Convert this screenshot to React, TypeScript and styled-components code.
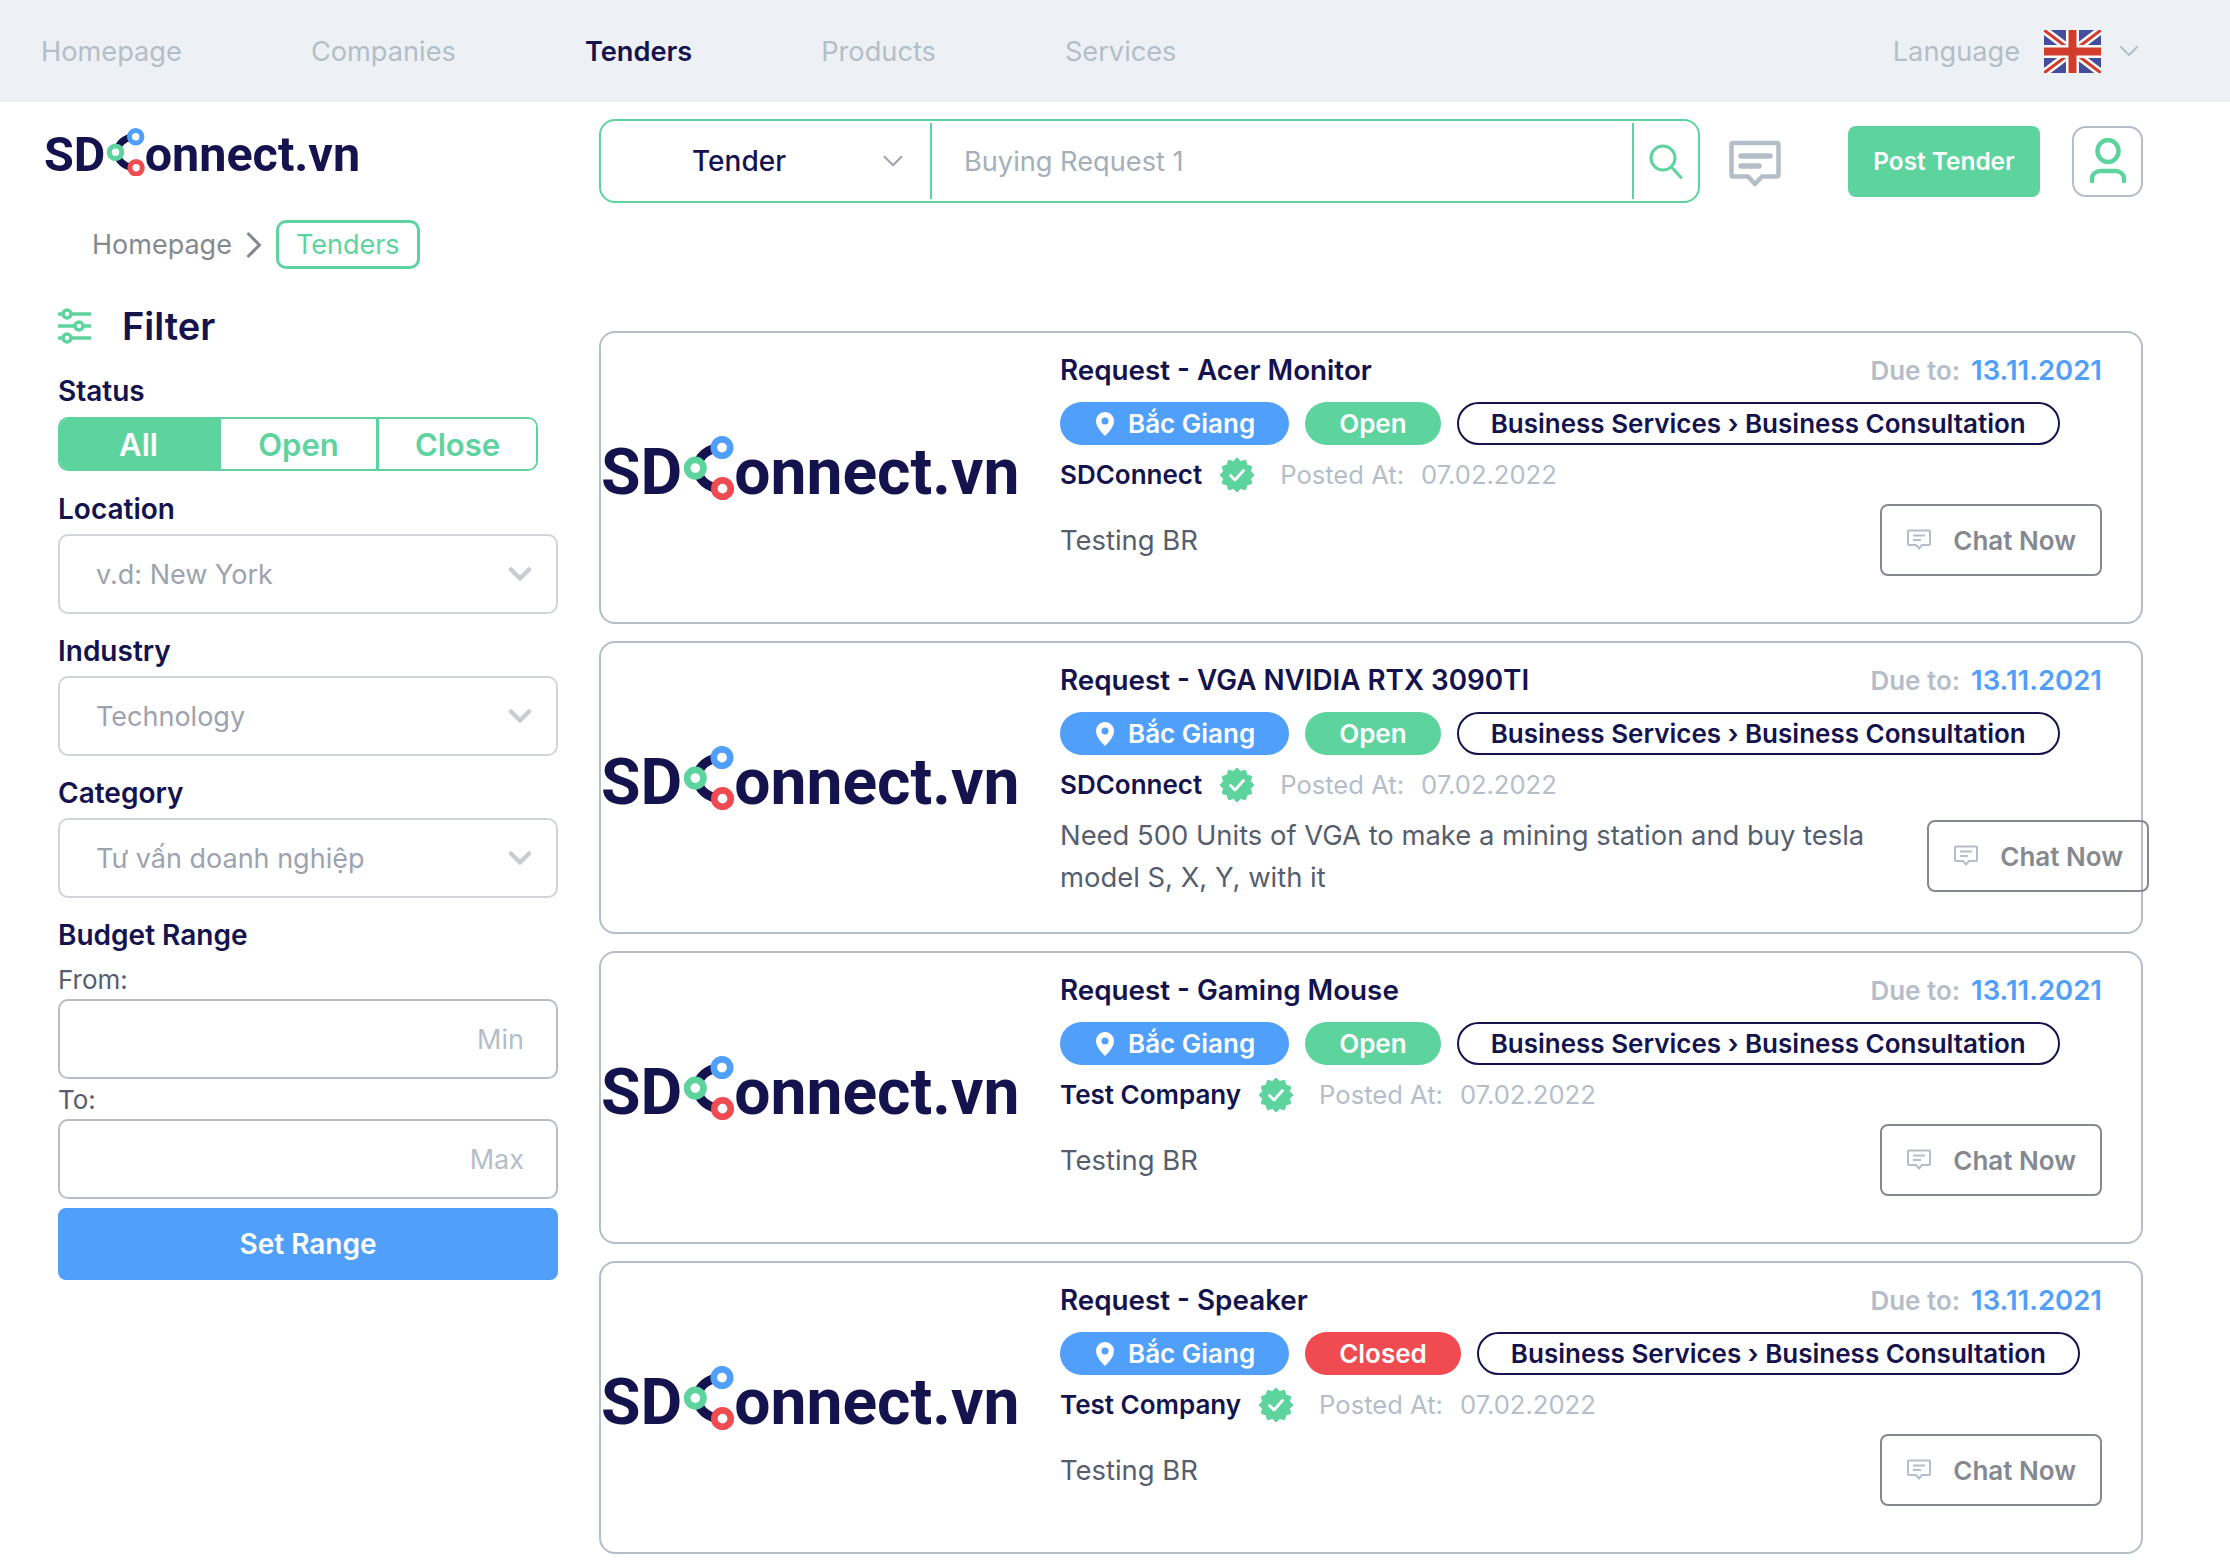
import React from 'react';
import styled, { createGlobalStyle } from 'styled-components';
import { ChevronDown, ChevronRight } from 'lucide-react';

const colors = {
  navy: '#14134d',
  green: '#5dd39e',
  blue: '#509ffb',
  red: '#f04b51',
  line: '#b4bec8',
  muted: '#85898f',
  body: '#565e6e',
};

const GlobalStyle = createGlobalStyle`
  * { box-sizing: border-box; }
  html, body { margin: 0; padding: 0; background: #fff; }
  body { font-family: Inter, "Noto Sans", sans-serif; color: ${colors.navy}; }
  input { font-family: inherit; }
`;

const Page = styled.div`
  width: 2230px;
  min-height: 1563px;
`;

const TopBar = styled.nav`
  height: 102px;
  background: #edf1f5;
  display: flex;
  align-items: center;
  padding: 0 85px 0 41px;
`;

const NavLinks = styled.div`
  display: flex;
  gap: 129px;
  flex: 1;
  padding-top: 2px;
`;

const NavLink = styled.a<{ $active?: boolean }>`
  font-size: 27.2px;
  line-height: 40px;
  font-weight: ${(p) => (p.$active ? 600 : 400)};
  color: ${(p) => (p.$active ? colors.navy : colors.line)};
`;

const LanguagePicker = styled.div`
  display: flex;
  align-items: center;
  font-size: 27.2px;
  color: ${colors.line};
  svg:first-of-type { margin-left: 24px; margin-right: 12px; }
`;

const Layout = styled.div`
  display: flex;
  align-items: flex-start;
`;

const Sidebar = styled.aside`
  width: 599px;
  flex: none;
  padding: 23px 41px 0 44px;
`;

const LogoWrap = styled.div<{ $size: number }>`
  display: flex;
  align-items: center;
  height: ${(p) => Math.round(p.$size * 1.25)}px;
  font-family: Roboto, Inter, sans-serif;
  font-weight: 700;
  font-size: ${(p) => p.$size}px;
  line-height: 1;
  color: ${colors.navy};
  white-space: nowrap;
  svg {
    width: 0.8em;
    height: 1em;
    flex: none;
    margin: -0.14em -0.02em 0 0.03em;
  }
`;

const Breadcrumb = styled.div`
  display: flex;
  align-items: center;
  margin: 34px 0 0 48px;
  font-size: 27px;
  color: ${colors.muted};
`;

const CrumbCurrent = styled.span`
  height: 49px;
  display: flex;
  align-items: center;
  padding: 0 17px;
  border: 3px solid ${colors.green};
  border-radius: 10px;
  color: ${colors.green};
`;

const FilterPanel = styled.div`
  margin: 32px 0 0 14px;
`;

const FilterHead = styled.div`
  display: flex;
  align-items: center;
  gap: 31px;
  height: 50px;
  font-size: 38px;
  font-weight: 600;
  margin-bottom: 20px;
`;

const FieldLabel = styled.div`
  height: 40px;
  line-height: 40px;
  font-size: 28px;
  font-weight: 600;
  margin: 18px 0 6px;
  &:first-of-type { margin-top: 0; }
`;

const Segments = styled.div`
  width: 480px;
  height: 54px;
  display: grid;
  grid-template-columns: 161px 155px 160px;
  border: 2px solid ${colors.green};
  border-radius: 10px;
  overflow: hidden;
`;

const Segment = styled.div<{ $active?: boolean; $divided?: boolean }>`
  display: flex;
  align-items: center;
  justify-content: center;
  padding-right: ${(p) => (p.$active ? 4 : 0)}px;
  font-size: 31px;
  font-weight: 600;
  color: ${(p) => (p.$active ? '#fff' : colors.green)};
  background: ${(p) => (p.$active ? colors.green : '#fff')};
  border-left: ${(p) => (p.$divided ? `3px solid ${colors.green}` : 'none')};
`;

const SelectBox = styled.div`
  height: 80px;
  margin: -1px 0;
  display: flex;
  align-items: center;
  justify-content: space-between;
  padding: 0 18px 0 36px;
  border: 2px solid #d1d5db;
  border-radius: 10px;
  font-size: 27px;
  color: #9ca3af;
`;

const SubLabel = styled.div`
  height: 40px;
  line-height: 42px;
  font-size: 26px;
  color: ${colors.body};
`;

const BudgetLabel = styled(FieldLabel)`
  margin-bottom: 4px;
`;

const RangeInput = styled.input`
  display: block;
  width: 100%;
  height: 80px;
  padding: 0 32px;
  border: 2px solid ${colors.line};
  border-radius: 10px;
  outline: none;
  text-align: right;
  font-size: 27px;
  &::placeholder { color: ${colors.line}; opacity: 1; }
`;

const SetRange = styled.button`
  display: block;
  width: 100%;
  height: 72px;
  margin-top: 9px;
  border: none;
  border-radius: 8px;
  background: ${colors.blue};
  color: #fff;
  font-family: inherit;
  font-size: 28px;
  font-weight: 600;
`;

const Main = styled.main`
  width: 1544px;
  flex: none;
  padding-top: 17px;
`;

const SearchRow = styled.div`
  display: flex;
  align-items: center;
  height: 84px;
  margin-bottom: 128px;
`;

const SearchBar = styled.div`
  width: 1101px;
  height: 84px;
  flex: none;
  display: flex;
  align-items: center;
  border: 2px solid ${colors.green};
  border-radius: 16px;
`;

const SearchScope = styled.div`
  width: 331px;
  height: 76px;
  flex: none;
  display: flex;
  align-items: center;
  justify-content: space-between;
  padding: 0 20px 0 91px;
  border-right: 2px solid ${colors.green};
  font-size: 28px;
  font-weight: 500;
  svg { color: #9ca3af; }
`;

const SearchInput = styled.input`
  flex: 1;
  min-width: 0;
  height: 76px;
  padding: 0 32px;
  border: none;
  border-right: 2px solid ${colors.green};
  outline: none;
  font-size: 27.2px;
  &::placeholder { color: #a5afb9; opacity: 1; }
`;

const SearchButton = styled.div`
  width: 64px;
  flex: none;
  display: flex;
  justify-content: center;
`;

const MessageButton = styled.div`
  margin: 5px 0 0 29px;
  display: flex;
`;

const PostTender = styled.button`
  margin-left: auto;
  width: 192px;
  height: 71px;
  border: none;
  border-radius: 8px;
  background: ${colors.green};
  color: #fff;
  font-family: inherit;
  font-size: 24.4px;
  font-weight: 600;
`;

const UserButton = styled.div`
  width: 71px;
  height: 71px;
  margin-left: 32px;
  display: flex;
  align-items: center;
  justify-content: center;
  border: 2px solid ${colors.line};
  border-radius: 14px;
`;

const CardList = styled.div`
  display: flex;
  flex-direction: column;
  gap: 17px;
`;

const Card = styled.article`
  height: 293px;
  display: flex;
  border: 2px solid ${colors.line};
  border-radius: 16px;
`;

const CardLogo = styled.div`
  width: 420px;
  flex: none;
  display: flex;
  align-items: center;
  padding-bottom: 10px;
`;

const CardBody = styled.div`
  flex: 1;
  min-width: 0;
  margin-left: 39px;
  padding: 18px 39px 0 0;
`;

const TitleRow = styled.div`
  display: flex;
  align-items: center;
  justify-content: space-between;
  height: 38px;
`;

const CardTitle = styled.h3`
  margin: 0;
  font-size: 27.8px;
  font-weight: 600;
`;

const DueDate = styled.div`
  display: flex;
  align-items: baseline;
  font-size: 26px;
  font-weight: 600;
  color: ${colors.line};
  span { color: ${colors.blue}; margin-left: 11px; font-size: 27.5px; }
`;

const TagRow = styled.div`
  display: flex;
  gap: 16px;
  margin-top: 13px;
`;

const Pill = styled.span<{ $tone: 'blue' | 'green' | 'red' | 'outline' }>`
  height: 43px;
  display: inline-flex;
  align-items: center;
  gap: 14px;
  padding: 0 ${(p) => (p.$tone === 'outline' ? 32 : 34)}px 0
    ${(p) => (p.$tone === 'blue' ? 36 : p.$tone === 'outline' ? 32 : 34)}px;
  border-radius: 22px;
  font-size: 26px;
  font-weight: 600;
  white-space: nowrap;
  color: ${(p) => (p.$tone === 'outline' ? colors.navy : '#fff')};
  background: ${(p) =>
    p.$tone === 'blue' ? colors.blue : p.$tone === 'green' ? colors.green : p.$tone === 'red' ? colors.red : '#fff'};
  border: ${(p) => (p.$tone === 'outline' ? `2px solid ${colors.navy}` : 'none')};
`;

const CompanyRow = styled.div`
  display: flex;
  align-items: center;
  height: 39px;
  margin-top: 10px;
`;

const CompanyName = styled.span`
  font-size: 26px;
  font-weight: 600;
  margin-right: 18px;
`;

const Posted = styled.span`
  font-size: 25.6px;
  color: ${colors.line};
  margin-left: 26px;
  span { margin-left: 17px; }
`;

const DetailRow = styled.div`
  display: flex;
  align-items: center;
  justify-content: space-between;
  margin-top: 10px;
`;

const Description = styled.p`
  flex: none;
  max-width: 867px;
  margin: 0;
  font-size: 27.4px;
  line-height: 42px;
  color: ${colors.body};
`;

const ChatNow = styled.button`
  width: 222px;
  height: 72px;
  flex: none;
  display: flex;
  align-items: center;
  justify-content: space-between;
  padding: 0 24px 0 25px;
  border: 2px solid ${colors.muted};
  border-radius: 8px;
  background: transparent;
  color: ${colors.muted};
  font-family: inherit;
  font-size: 26px;
  font-weight: 600;
  white-space: nowrap;
`;

const LogoMark = () => (
  <svg viewBox="0 0 50 62" aria-hidden="true">
    <path d="M37 11A24 20 0 0 0 37 51" fill="none" stroke={colors.navy} strokeWidth="9" />
    <circle cx="37" cy="11" r="8" fill="#fff" stroke={colors.blue} strokeWidth="6.5" />
    <circle cx="11" cy="31" r="8" fill="#fff" stroke={colors.green} strokeWidth="6.5" />
    <circle cx="37.500" cy="51" r="8" fill="#fff" stroke={colors.red} strokeWidth="6.5" />
  </svg>
);

const Logo = ({ size }: { size: number }) => (
  <LogoWrap $size={size}>
    SD
    <LogoMark />
    onnect.vn
  </LogoWrap>
);

const FlagUk = () => (
  <svg width="57" height="43" viewBox="0 0 57 43" aria-hidden="true">
    <rect width="57" height="43" fill="#444e9e" />
    <path d="M0 0L57 43M57 0L0 43" stroke="#fff" strokeWidth="8" />
    <path d="M0 0L57 43M57 0L0 43" stroke="#d23c2a" strokeWidth="3" />
    <path d="M28.5 0V43M0 21.5H57" stroke="#fff" strokeWidth="13" />
    <path d="M28.5 0V43M0 21.5H57" stroke="#d23c2a" strokeWidth="8" />
  </svg>
);

const SlidersIcon = () => (
  <svg width="33" height="36" viewBox="0 0 33 36" fill="none" stroke={colors.green} strokeWidth="3.4" strokeLinecap="round" aria-hidden="true">
    <path d="M13 6H32M1 6H5M1 18H17M25 18H32M13 30H32M1 30H5" />
    <circle cx="9" cy="6" r="4" />
    <circle cx="21" cy="18" r="4" />
    <circle cx="9" cy="30" r="4" />
  </svg>
);

const SearchIcon = () => (
  <svg width="34" height="35" viewBox="0 0 34 35" fill="none" stroke={colors.green} strokeWidth="3" strokeLinecap="round" aria-hidden="true">
    <circle cx="14" cy="14" r="12" />
    <path d="M22.500 23L32 33.500" />
  </svg>
);

const MessageIcon = () => (
  <svg width="52" height="48" viewBox="0 0 52 48" aria-hidden="true">
    <path d="M4 3H48A1.5 1.5 0 0 1 49.5 4.500V35A1.500 1.500 0 0 1 48 36.500H33L26 44L19 36.500H4A1.500 1.500 0 0 1 2.500 35V4.500A1.500 1.500 0 0 1 4 3Z" fill="#fff" stroke={colors.line} strokeWidth="4.500" strokeLinejoin="round" />
    <path d="M12 16H41M12 26H30" stroke={colors.line} strokeWidth="5.500" strokeLinecap="round" />
  </svg>
);

const UserIcon = () => (
  <svg width="38" height="46" viewBox="0 0 38 46" fill="none" stroke={colors.green} strokeWidth="4.500" strokeLinecap="round" aria-hidden="true">
    <ellipse cx="19" cy="13" rx="10.500" ry="11" />
    <path d="M3 43V41C3 36 7 33 12 33H26C31 33 35 36 35 41V43" />
  </svg>
);

const PinIcon = () => (
  <svg width="18" height="24" viewBox="0 0 18 24" aria-hidden="true">
    <path d="M9 0C4 0 0 4 0 9C0 15 6 21 9 24C12 21 18 15 18 9C18 4 14 0 9 0Z" fill="#fff" />
    <circle cx="9" cy="9" r="3.500" fill={colors.blue} />
  </svg>
);

// scalloped badge outline, 12 points
const badgePoints = Array.from({ length: 24 }, (_, i) => {
  const r = i % 2 === 0 ? 17 : 14;
  const a = (i / 24) * Math.PI * 2;
  return `${(17 + r * Math.sin(a)).toFixed(2)},${(17 - r * Math.cos(a)).toFixed(2)}`;
}).join(' ');

const VerifiedIcon = () => (
  <svg width="34" height="34" viewBox="0 0 34 34" style={{ flex: 'none' }} aria-hidden="true">
    <polygon points={badgePoints} fill={colors.green} stroke={colors.green} strokeWidth="1" strokeLinejoin="round" />
    <path d="M10.500 17.500L15 22L23.500 12.500" fill="none" stroke="#fff" strokeWidth="2.800" strokeLinecap="round" strokeLinejoin="round" />
  </svg>
);

const ChatIcon = () => (
  <svg width="24" height="22" viewBox="0 0 24 22" fill="none" stroke={colors.line} strokeWidth="2" aria-hidden="true">
    <path d="M2 1.500H22A1 1 0 0 1 23 2.500V15A1 1 0 0 1 22 16H15L12 19.500L9 16H2A1 1 0 0 1 1 15V2.500A1 1 0 0 1 2 1.500Z" />
    <path d="M6 6.500H18M6 11H14" />
  </svg>
);

const tenders = [
  { title: 'Request - Acer Monitor', status: 'Open', company: 'SDConnect', text: 'Testing BR' },
  {
    title: 'Request - VGA NVIDIA RTX 3090TI',
    status: 'Open',
    company: 'SDConnect',
    text: 'Need 500 Units of VGA to make a mining station and buy tesla model S, X, Y, with it',
  },
  { title: 'Request - Gaming Mouse', status: 'Open', company: 'Test Company', text: 'Testing BR' },
  { title: 'Request - Speaker', status: 'Closed', company: 'Test Company', text: 'Testing BR' },
];

const filterSelects = [
  { label: 'Location', value: 'v.d: New York' },
  { label: 'Industry', value: 'Technology' },
  { label: 'Category', value: 'Tư vấn doanh nghiệp' },
];

const App: React.FC = () => (
  <Page>
    <GlobalStyle />
    <TopBar>
      <NavLinks>
        <NavLink>Homepage</NavLink>
        <NavLink>Companies</NavLink>
        <NavLink $active>Tenders</NavLink>
        <NavLink>Products</NavLink>
        <NavLink>Services</NavLink>
      </NavLinks>
      <LanguagePicker>
        Language
        <FlagUk />
        <ChevronDown size={32} strokeWidth={1.5} />
      </LanguagePicker>
    </TopBar>
    <Layout>
      <Sidebar>
        <Logo size={48.5} />
        <Breadcrumb>
          Homepage
          <ChevronRight size={44} strokeWidth={1.7} />
          <CrumbCurrent>Tenders</CrumbCurrent>
        </Breadcrumb>
        <FilterPanel>
          <FilterHead>
            <SlidersIcon />
            Filter
          </FilterHead>
          <FieldLabel>Status</FieldLabel>
          <Segments>
            <Segment $active>All</Segment>
            <Segment>Open</Segment>
            <Segment $divided>Close</Segment>
          </Segments>
          {filterSelects.map((f) => (
            <React.Fragment key={f.label}>
              <FieldLabel>{f.label}</FieldLabel>
              <SelectBox>
                {f.value}
                <ChevronDown size={36} strokeWidth={3} color="#c9ccd1" />
              </SelectBox>
            </React.Fragment>
          ))}
          <BudgetLabel>Budget Range</BudgetLabel>
          <SubLabel>From:</SubLabel>
          <RangeInput placeholder="Min" />
          <SubLabel>To:</SubLabel>
          <RangeInput placeholder="Max" />
          <SetRange>Set Range</SetRange>
        </FilterPanel>
      </Sidebar>
      <Main>
        <SearchRow>
          <SearchBar>
            <SearchScope>
              Tender
              <ChevronDown size={34} strokeWidth={1.4} />
            </SearchScope>
            <SearchInput placeholder="Buying Request 1" />
            <SearchButton>
              <SearchIcon />
            </SearchButton>
          </SearchBar>
          <MessageButton>
            <MessageIcon />
          </MessageButton>
          <PostTender>Post Tender</PostTender>
          <UserButton>
            <UserIcon />
          </UserButton>
        </SearchRow>
        <CardList>
          {tenders.map((t) => (
            <Card key={t.title}>
              <CardLogo>
                <Logo size={64.2} />
              </CardLogo>
              <CardBody>
                <TitleRow>
                  <CardTitle>{t.title}</CardTitle>
                  <DueDate>
                    Due to:<span>13.11.2021</span>
                  </DueDate>
                </TitleRow>
                <TagRow>
                  <Pill $tone="blue">
                    <PinIcon />
                    Bắc Giang
                  </Pill>
                  <Pill $tone={t.status === 'Open' ? 'green' : 'red'}>{t.status}</Pill>
                  <Pill $tone="outline">Business Services › Business Consultation</Pill>
                </TagRow>
                <CompanyRow>
                  <CompanyName>{t.company}</CompanyName>
                  <VerifiedIcon />
                  <Posted>
                    Posted At:<span>07.02.2022</span>
                  </Posted>
                </CompanyRow>
                <DetailRow>
                  <Description>{t.text}</Description>
                  <ChatNow>
                    <ChatIcon />
                    Chat Now
                  </ChatNow>
                </DetailRow>
              </CardBody>
            </Card>
          ))}
        </CardList>
      </Main>
    </Layout>
  </Page>
);

export default App;
